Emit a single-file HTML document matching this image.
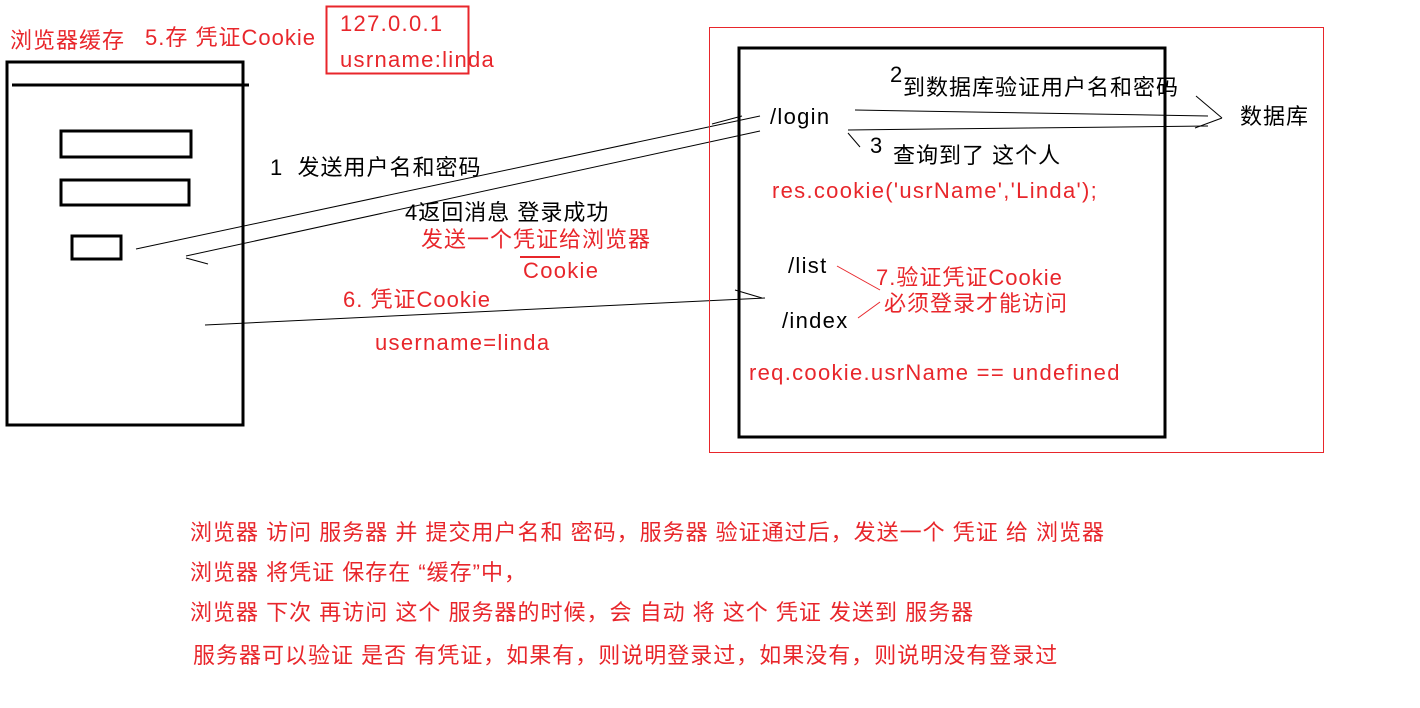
<!DOCTYPE html>
<html><head><meta charset="utf-8"><style>
body{margin:0;width:1420px;height:708px;background:#fff;position:relative;overflow:hidden;font-family:"Liberation Sans","Noto Sans CJK SC",sans-serif;font-size:22px;letter-spacing:1px}
.t{position:absolute;line-height:26px;white-space:nowrap;color:#000}
.r{color:#e8262b}
.l{letter-spacing:1.3px}
svg{position:absolute;left:0;top:0}
</style></head><body>
<svg width="1420" height="708">
<g fill="none" stroke="#000">
<rect x="7" y="62" width="236" height="363" stroke-width="3"/>
<line x1="12" y1="85" x2="249" y2="85" stroke-width="3"/>
<rect x="61" y="131" width="130" height="26" stroke-width="3"/>
<rect x="61" y="180" width="128" height="25" stroke-width="3"/>
<rect x="72" y="236" width="49" height="23" stroke-width="3"/>
<rect x="739" y="48" width="426" height="389" stroke-width="3"/>
<line x1="136" y1="249" x2="760" y2="116" stroke-width="1"/>
<line x1="712" y1="124" x2="742" y2="116" stroke-width="1"/>
<line x1="186" y1="256" x2="760" y2="131" stroke-width="1"/>
<line x1="186" y1="258" x2="208" y2="264" stroke-width="1"/>
<line x1="205" y1="325" x2="765" y2="298" stroke-width="1"/>
<line x1="735" y1="290" x2="762" y2="298" stroke-width="1"/>
<line x1="855" y1="110" x2="1208" y2="116" stroke-width="1"/>
<line x1="848" y1="130" x2="1208" y2="126" stroke-width="1"/>
<line x1="1196" y1="96" x2="1222" y2="118" stroke-width="1"/>
<line x1="1222" y1="118" x2="1195" y2="128" stroke-width="1"/>
<line x1="848" y1="133" x2="860" y2="147" stroke-width="1"/>
</g>
<g fill="none" stroke="#e8262b">
<rect x="326.5" y="6.5" width="142" height="67" stroke-width="2"/>
<rect x="709.5" y="27.5" width="614" height="425" stroke-width="1"/>
<line x1="837" y1="266" x2="880" y2="290" stroke-width="1"/>
<line x1="858" y1="318" x2="880" y2="302" stroke-width="1"/>
<line x1="520" y1="257" x2="560" y2="257" stroke-width="2"/>
</g>
</svg>
<div class="t r" style="left:10px;top:28px">浏览器缓存</div>
<div class="t r" style="left:145px;top:25px">5.存 凭证Cookie</div>
<div class="t r l" style="left:340px;top:11px">127.0.0.1</div>
<div class="t r l" style="left:340px;top:47px">usrname:linda</div>
<div class="t l" style="left:770px;top:104px">/login</div>
<div class="t" style="left:890px;top:62px">2</div>
<div class="t" style="left:903px;top:75px">到数据库验证用户名和密码</div>
<div class="t" style="left:1240px;top:104px">数据库</div>
<div class="t" style="left:870px;top:133px">3</div>
<div class="t" style="left:893px;top:143px">查询到了 这个人</div>
<div class="t r l" style="left:772px;top:178px">res.cookie('usrName','Linda');</div>
<div class="t" style="left:270px;top:155px">1&nbsp; 发送用户名和密码</div>
<div class="t" style="left:405px;top:200px">4返回消息 登录成功</div>
<div class="t r" style="left:421px;top:227px">发送一个凭证给浏览器</div>
<div class="t r l" style="left:523px;top:258px">Cookie</div>
<div class="t r" style="left:343px;top:287px">6. 凭证Cookie</div>
<div class="t r l" style="left:375px;top:330px">username=linda</div>
<div class="t l" style="left:788px;top:253px">/list</div>
<div class="t l" style="left:782px;top:308px">/index</div>
<div class="t r" style="left:876px;top:265px">7.验证凭证Cookie</div>
<div class="t r" style="left:884px;top:291px">必须登录才能访问</div>
<div class="t r l" style="left:749px;top:360px">req.cookie.usrName == undefined</div>
<div class="t r" style="left:190px;top:520px">浏览器 访问 服务器 并 提交用户名和 密码，服务器 验证通过后，发送一个 凭证 给 浏览器</div>
<div class="t r" style="left:190px;top:560px">浏览器 将凭证 保存在 “缓存”中，</div>
<div class="t r" style="left:190px;top:600px">浏览器 下次 再访问 这个 服务器的时候，会 自动 将 这个 凭证 发送到 服务器</div>
<div class="t r" style="left:193px;top:643px">服务器可以验证 是否 有凭证，如果有，则说明登录过，如果没有，则说明没有登录过</div>
</body></html>
